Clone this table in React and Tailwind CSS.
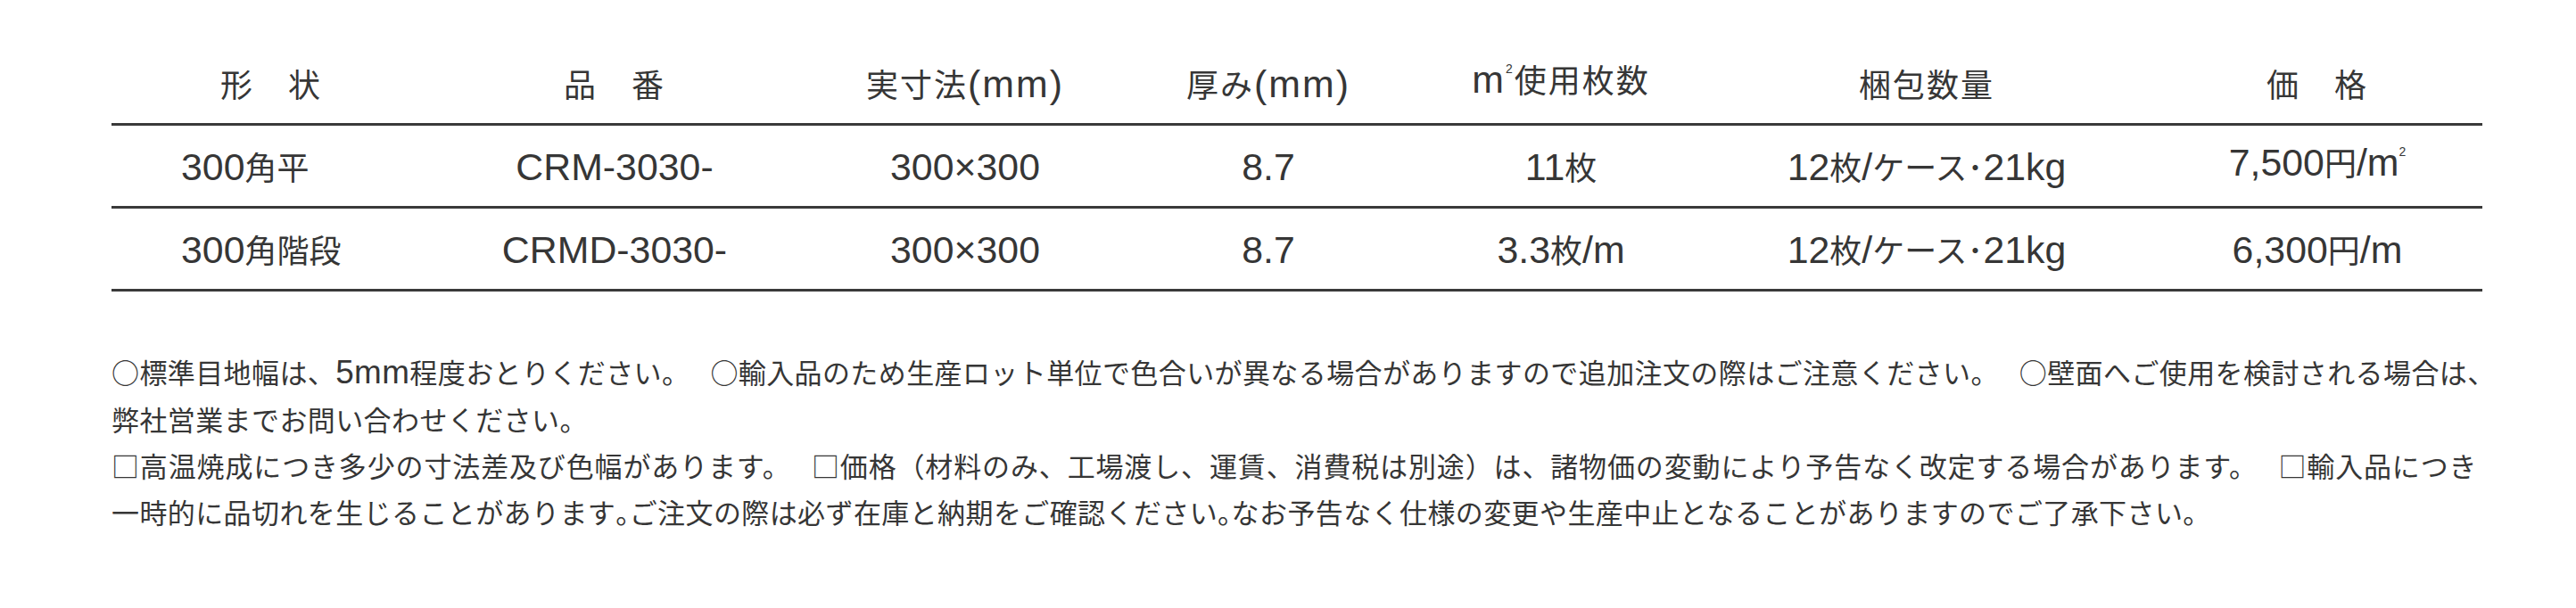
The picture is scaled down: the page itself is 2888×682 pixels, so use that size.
import React from 'react';

// Latin runs are set larger than the kana/kanji around them, as in the original print
const latin = "font-['Liberation_Sans',sans-serif] text-[1.19em]";

const Mix = ({ text, tight = false }) => {
  const parts = text.split(/([\x21-\x7E\u00D7]+|㎡| |。)/);
  return parts.map((p, i) => {
    if (!p) return null;
    if (p === '㎡') {
      return (
        <span key={i} className={latin}>
          m<span className="relative top-[-22px] text-[14px]">2</span>
        </span>
      );
    }
    if (p === ' ') return <span key={i} className="inline-block w-[23px]" />;
    if (p === '。') {
      return tight ? <span key={i} className="tracking-[-0.5em]">。</span> : <span key={i}>。</span>;
    }
    if (/^[\x21-\x7E\u00D7]+$/.test(p)) {
      return <span key={i} className={latin}>{p}</span>;
    }
    return <span key={i}>{p}</span>;
  });
};

const cols = 'grid grid-cols-[358px_412px_374px_306px_350px_470px_388px]';

const headers = ['形　状', '品　番', '実寸法(mm)', '厚み(mm)', '㎡使用枚数', '梱包数量', '価　格'];

const rows = [
  ['300角平', 'CRM-3030-', '300×300', '8.7', '11枚', '12枚/ケース･21kg', '7,500円/㎡'],
  ['300角階段', 'CRMD-3030-', '300×300', '8.7', '3.3枚/m', '12枚/ケース･21kg', '6,300円/m'],
];

// wrapped lines of each paragraph are justified to the full width, last lines are not
const notes = [
  { text: '○標準目地幅は、5mm程度おとりください。 ○輸入品のため生産ロット単位で色合いが異なる場合がありますので追加注文の際はご注意ください。 ○壁面へご使用を検討される場合は、', full: true },
  { text: '弊社営業までお問い合わせください。' },
  { text: '□高温焼成につき多少の寸法差及び色幅があります。 □価格（材料のみ、工場渡し、運賃、消費税は別途）は、諸物価の変動により予告なく改定する場合があります。 □輸入品につき', full: true },
  { text: '一時的に品切れを生じることがあります。ご注文の際は必ず在庫と納期をご確認ください。なお予告なく仕様の変更や生産中止となることがありますのでご了承下さい。', tight: true },
];

const cellClass = (i) => {
  if (i === 0) return 'text-left pl-[78px]';
  if (i === 6) return 'text-center pl-[18px]';
  return 'text-center';
};

export default function App() {
  return (
    <div className="w-[2888px] h-[682px] bg-white text-[#363636] font-['Noto_Sans_CJK_JP',sans-serif] overflow-hidden">
      <div className="ml-[125px] w-[2658px]">
        <div className={`${cols} h-[141px] pt-[68px] items-start text-[36px] leading-[50px] tracking-[2px] border-b-[3px] border-[#3a3a3a]`}>
          {headers.map((h, i) => (
            <div key={i} className={`h-[50px] flex items-center justify-center ${i === 6 ? 'pl-[18px]' : ''}`}>
              <span className="whitespace-nowrap">
                <Mix text={h} />
              </span>
            </div>
          ))}
        </div>
        {rows.map((r, ri) => (
          <div key={ri} className={`${cols} h-[93px] items-center text-[36px] leading-[50px] border-b-[3px] border-[#3a3a3a]`}>
            {r.map((c, i) => (
              <div key={i} className={`whitespace-nowrap ${cellClass(i)}`}>
                <Mix text={c} />
              </div>
            ))}
          </div>
        ))}
      </div>
      <div className="ml-[125px] mt-[64px] text-[31px] tracking-[0.4px] leading-[52px] whitespace-nowrap">
        {notes.map((n, i) => (
          <div key={i} className={n.full ? 'w-[2652px] text-justify [text-align-last:justify]' : ''}>
            <Mix text={n.text} tight={n.tight} />
          </div>
        ))}
      </div>
    </div>
  );
}
